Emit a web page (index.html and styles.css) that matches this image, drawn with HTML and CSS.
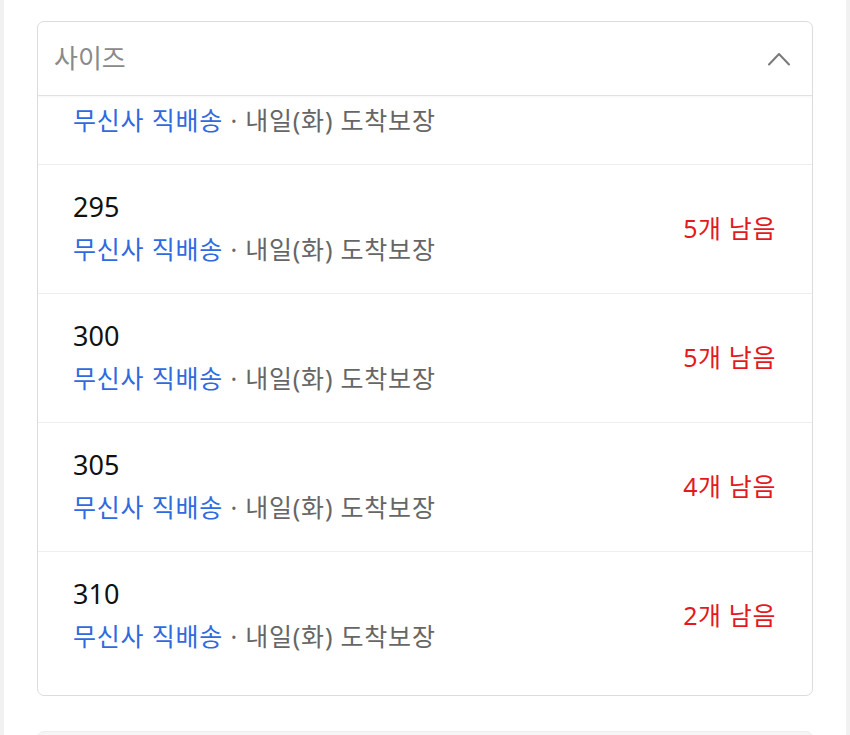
FILE: index.html
```html
<!DOCTYPE html>
<html lang="ko">
<head>
    <meta charset="UTF-8">
    <title>사이즈 선택</title>
    <link rel="stylesheet" href="styles.css">
</head>
<body>
    <div class="panel">
        <div class="dropdown">
            <div class="dropdown-header">
                <span class="dropdown-label">사이즈</span>
                <svg class="chevron" width="24" height="14" viewBox="0 0 24 14">
                    <polyline points="2,12.5 12,2 22,12.5" fill="none" stroke="#7a7a7a" stroke-width="2" stroke-linecap="round" stroke-linejoin="round"/>
                </svg>
            </div>
            <ul class="option-list">
                <li class="option partial">
                    <div class="delivery"><span class="carrier">무신사 직배송</span> · 내일(화) 도착보장</div>
                </li>
                <li class="option">
                    <div class="option-info">
                        <div class="size">295</div>
                        <div class="delivery"><span class="carrier">무신사 직배송</span> · 내일(화) 도착보장</div>
                    </div>
                    <div class="stock">5개 남음</div>
                </li>
                <li class="option">
                    <div class="option-info">
                        <div class="size">300</div>
                        <div class="delivery"><span class="carrier">무신사 직배송</span> · 내일(화) 도착보장</div>
                    </div>
                    <div class="stock">5개 남음</div>
                </li>
                <li class="option">
                    <div class="option-info">
                        <div class="size">305</div>
                        <div class="delivery"><span class="carrier">무신사 직배송</span> · 내일(화) 도착보장</div>
                    </div>
                    <div class="stock">4개 남음</div>
                </li>
                <li class="option last">
                    <div class="option-info">
                        <div class="size">310</div>
                        <div class="delivery"><span class="carrier">무신사 직배송</span> · 내일(화) 도착보장</div>
                    </div>
                    <div class="stock">2개 남음</div>
                </li>
            </ul>
        </div>
        <div class="next-box"></div>
    </div>
</body>
</html>
```

FILE: styles.css
```css
body {
    margin: 0;
    background: #f1f1f1;
    font-family: "Noto Sans", "Noto Sans CJK KR", sans-serif;
}
.panel {
    margin: 0 4px;
    background: white;
    padding: 21px 33px 0;
    height: 735px;
    box-sizing: border-box;
    overflow: hidden;
}
.dropdown {
    border: 1px solid #dcdcdc;
    border-radius: 7px;
    overflow: hidden;
}
.dropdown-header {
    height: 73px;
    display: flex;
    align-items: center;
    justify-content: space-between;
    padding: 0 21px 0 16px;
    border-bottom: 1px solid #e2e2e2;
    box-shadow: 0 1px 2px rgba(0,0,0,0.04);
}
.dropdown-label {
    font-size: 26px;
    color: #8a8a8a;
    margin-top: -3px;
}
.chevron {
    margin-top: 1px;
}
.option-list {
    list-style: none;
    margin: 0;
    padding: 0 0 15px;
}
.option {
    display: flex;
    align-items: center;
    justify-content: space-between;
    height: 128px;
    padding: 0 36px 0 35px;
    border-bottom: 1px solid #eeeeee;
}
.option.partial {
    height: 68px;
    align-items: flex-start;
}
.option.partial .delivery {
    margin-top: 6px;
}
.option.last {
    border-bottom: none;
}
.size {
    font-size: 27px;
    line-height: 36px;
    color: #111;
    margin-top: -2px;
}
.delivery {
    font-size: 25px;
    line-height: 36px;
    margin-top: 6px;
    color: #666;
    letter-spacing: 0.8px;
}
.carrier {
    color: #2f6ae0;
}
.stock {
    font-size: 25px;
    letter-spacing: 0.6px;
    color: #e3191e;
    margin-top: -4px;
}
.next-box {
    margin-top: 35px;
    height: 40px;
    background: #f6f6f6;
    border: 1px solid #eeeeee;
    border-radius: 7px;
}
```
